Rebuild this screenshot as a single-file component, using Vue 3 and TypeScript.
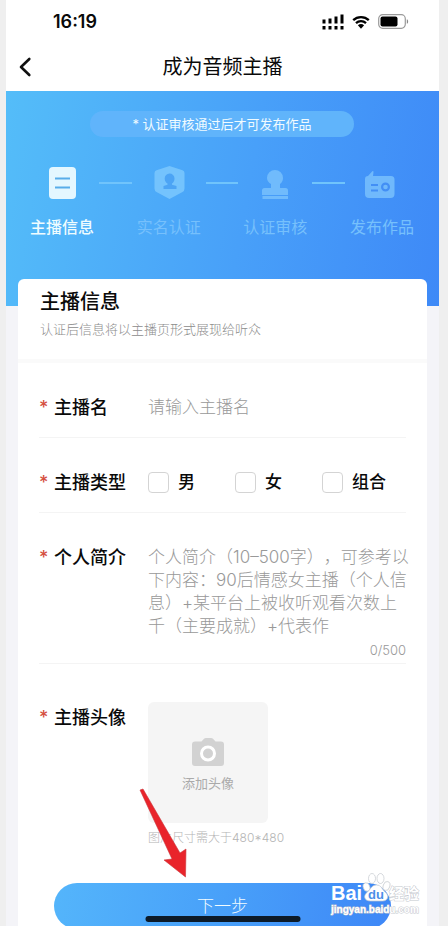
<script setup lang="ts">
import { computed, ref } from 'vue'

interface Step {
  id: string
  label: string
}

const steps: Step[] = [
  { id: 'info', label: '主播信息' },
  { id: 'identity', label: '实名认证' },
  { id: 'review', label: '认证审核' },
  { id: 'publish', label: '发布作品' },
]

const hostTypes: string[] = ['男', '女', '组合']

const activeStep = ref(0)
const hostName = ref('')
const selectedTypes = ref<string[]>([])
const intro = ref('')
const maxIntro = 500
const introCount = computed(() => `${intro.value.length}/${maxIntro}`)
</script>

<template>
  <div class="screen">
    <div class="status-bar">
      <span class="clock">16:19</span>
      <div class="status-icons">
        <svg width="22" height="16" viewBox="0 0 22 16" aria-hidden="true">
          <path d="M0.5 5.5h3v4h-3zM6.5 4.5h3v5h-3zM12.500 2.500h3v7h-3zM18.500 0.500h3v9h-3zM0.500 12h3v3.500h-3zM6.500 12h3v3.500h-3zM12.500 12h3v3.500h-3zM18.500 12h3v3.500h-3z" />
        </svg>
        <svg width="18" height="14" viewBox="0 0 18 14" aria-hidden="true">
          <path d="M1.200 5.200a11.200 11.200 0 0 1 15.600 0M4 8.200a7.300 7.300 0 0 1 10 0" fill="none" stroke="#000" stroke-width="2.300" />
          <path d="M5.900 10.300a4.600 4.600 0 0 1 6.200 0L9 13.800z" />
        </svg>
        <svg width="31" height="15" viewBox="0 0 31 15" aria-hidden="true">
          <rect x="0.700" y="0.700" width="26.600" height="13.600" rx="4" fill="none" stroke="#9a9a9a" stroke-width="1.200" />
          <rect x="2.500" y="2.500" width="17" height="10" rx="2" />
          <path d="M28.800 5.200c1.800.7 1.800 3.900 0 4.600z" fill="#888" />
        </svg>
      </div>
    </div>

    <header class="nav">
      <button class="back" type="button" aria-label="返回">
        <svg width="14" height="20" viewBox="0 0 14 20" aria-hidden="true">
          <path d="M11.300 2L3 10l8.300 8" fill="none" stroke="#111" stroke-width="2.600" stroke-linecap="round" stroke-linejoin="round" />
        </svg>
      </button>
      <h1>成为音频主播</h1>
    </header>

    <main>
      <section class="banner">
        <p class="notice">* 认证审核通过后才可发布作品</p>
        <div class="steps">
          <template v-for="(step, index) in steps" :key="step.id">
            <span v-if="index > 0" class="connector"></span>
            <div class="step" :class="{ active: index === activeStep }">
              <svg width="34" height="36" viewBox="0 0 34 36" aria-hidden="true">
                <template v-if="step.id === 'info'">
                  <rect x="4" y="2" width="27" height="32" rx="4" fill="#e4f7ff" />
                  <path d="M10 13.500h15M10 22.500h15" stroke="#58adea" stroke-width="2" />
                </template>
                <template v-else-if="step.id === 'identity'">
                  <path d="M17.500 1l13 4.200q2 .7 2 2.800v15.500q0 2.500-2 3.500l-13 7-13-7q-2-1-2-3.500V8q0-2.100 2-2.800z" fill="#74c3fd" />
                  <path d="M17.500 8.500a5 5 0 0 1 5 5c0 2.400-1 4-2.500 5v1.200l4.500 1.300v3h-13v-3l4-1.300v-1.200c-1.700-1-2.800-2.600-2.800-5a4.900 4.900 0 0 1 4.800-5z" fill="#4ca4f5" />
                </template>
                <template v-else-if="step.id === 'review'">
                  <path d="M17 5a8 8 0 0 1 8 8c0 2.800-1.300 4.700-3 6v4h5.500q2.500 0 2.500 2.500V30H4v-4.500Q4 23 6.500 23H13v-4c-2.200-1.300-4-3.200-4-6a8 8 0 0 1 8-8zM4.500 31h25.500v3H4.500z" fill="#70bbfc" />
                </template>
                <template v-else>
                  <path d="M0 14q0-3 3-3L7.300 6.300q1.200-.8 1.200.7L8 11h18q3.500 0 3.500 3.500V29q0 4-4 4H4q-4 0-4-4z" fill="#70b9fc" />
                  <path d="M6 20h7M6 25.500h7" stroke="#438ff5" stroke-width="2" />
                  <circle cx="20.500" cy="22" r="3.400" fill="none" stroke="#438ff5" stroke-width="2.200" />
                </template>
              </svg>
              <span>{{ step.label }}</span>
            </div>
          </template>
        </div>
      </section>

      <section class="card">
        <div class="card-head">
          <h2>主播信息</h2>
          <p>认证后信息将以主播页形式展现给听众</p>
        </div>

        <form @submit.prevent>
          <div class="row">
            <label class="name" for="host-name">主播名</label>
            <input id="host-name" v-model="hostName" class="field" type="text" placeholder="请输入主播名" />
          </div>

          <div class="row" role="group" aria-labelledby="type-title">
            <span id="type-title" class="name">主播类型</span>
            <div class="field options">
              <label v-for="kind in hostTypes" :key="kind" class="option">
                <input v-model="selectedTypes" type="checkbox" :value="kind" />
                <span>{{ kind }}</span>
              </label>
            </div>
          </div>

          <div class="row intro">
            <label class="name" for="intro">个人简介</label>
            <div class="field">
              <textarea
                id="intro"
                v-model="intro"
                rows="4"
                :maxlength="maxIntro"
                placeholder="个人简介（10–500字），可参考以下内容：90后情感女主播（个人信息）+某平台上被收听观看次数上千（主要成就）+代表作"
              ></textarea>
              <span class="count">{{ introCount }}</span>
            </div>
          </div>

          <div class="row avatar">
            <span class="name">主播头像</span>
            <div class="field">
              <button class="upload" type="button">
                <svg width="32" height="28" viewBox="0 0 32 28" aria-hidden="true">
                  <path d="M3 3.500h6.500L12 .8Q12.600 0 14 0h5q1.400 0 2 .8l2.500 2.700H29q3 0 3 3V25q0 3-3 3H3q-3 0-3-3V6.500q0-3 3-3z" fill="#d2d2d2" />
                  <circle cx="16" cy="15.500" r="6.500" fill="#d2d2d2" stroke="#fff" stroke-width="3" />
                </svg>
                <span>添加头像</span>
              </button>
              <p class="hint">图片尺寸需大于480*480</p>
            </div>
          </div>

          <button class="next" type="submit">下一步</button>
        </form>
      </section>
    </main>

    <svg class="arrow" width="50" height="92" viewBox="0 0 50 92" aria-hidden="true">
      <path d="M5 3l3-1 37 64 6-4-.5 28L29 73l8-1z" transform="translate(0 -1)" fill="#e9242b" stroke="#c9353a" stroke-width="0.600" />
    </svg>
    <span class="home-bar"></span>
    <svg class="watermark" width="92" height="46" viewBox="0 0 92 46" aria-label="Baidu 经验">
      <g fill="#fff" stroke="#c4c8ce" stroke-width="0.700">
        <ellipse cx="36.500" cy="16" rx="3.300" ry="4.300" transform="rotate(-18 36.500 16)" />
        <ellipse cx="42" cy="7.500" rx="3.500" ry="5" />
        <ellipse cx="50.500" cy="7.500" rx="3.500" ry="5" />
        <ellipse cx="56.500" cy="15" rx="3.300" ry="4.600" transform="rotate(18 56.500 15)" />
        <path d="M46.500 14c5 0 5.500 4.500 8.500 7 5 4 2.500 9-2.500 9h-12c-6 0-8-5-3-9 3.500-3 4-7 9-7z" />
      </g>
      <text class="brand" x="1" y="29">Bai</text>
      <text class="du" x="38" y="28">du</text>
      <text class="exp" x="59" y="28">经验</text>
      <text class="site" x="1" y="42">jingyan.baidu.com</text>
    </svg>
  </div>
</template>

<style>
body {
  margin: 0;
  background: #efefef;
}
</style>

<style scoped>
* {
  box-sizing: border-box;
}

.screen {
  position: relative;
  height: 100vh;
  margin: 0 9px 0 6px;
  overflow: hidden;
  background: #f4f4f8;
  color: #0a0a0a;
  font-family: Inter, "Noto Sans CJK SC", sans-serif;
}

h1,
h2,
p {
  margin: 0;
}

button,
input,
textarea {
  font-family: inherit;
}

.status-bar {
  display: flex;
  align-items: center;
  justify-content: space-between;
  height: 43px;
  padding: 0 30px 0 47px;
  background: #fff;
}

.clock {
  font-size: 18px;
  font-weight: 600;
}

.status-icons {
  display: flex;
  align-items: center;
  gap: 8px;
}

.nav {
  display: grid;
  grid-template-columns: 48px 1fr 48px;
  align-items: center;
  height: 48px;
  background: #fff;
}

.back {
  display: flex;
  padding: 0 0 0 12px;
  border: 0;
  background: none;
}

h1 {
  font-size: 20px;
  font-weight: 400;
  line-height: 28px;
  text-align: center;
}

.banner {
  height: 215px;
  padding: 20px 25px 0 24px;
  background: linear-gradient(100deg, #54bdf9, #48a0f9 55%, #3e89f7);
}

.notice {
  width: 264px;
  margin: 0 auto;
  border-radius: 13px;
  background: #60b4fb;
  color: #f0fbff;
  font-size: 13px;
  line-height: 26px;
  text-align: center;
}

.steps {
  display: flex;
  margin-top: 28px;
}

.step {
  display: flex;
  flex-direction: column;
  align-items: center;
  gap: 14px;
  width: 64px;
  color: #76c0fc;
  font-size: 16px;
  line-height: 24px;
  white-space: nowrap;
}

.step.active {
  color: #effcff;
  font-weight: 500;
}

.connector {
  flex: 1;
  height: 2px;
  margin: 17px 5px 0;
  background: #70c4fc;
}

.card {
  position: relative;
  margin: -27px 12px 0;
  border-radius: 6px 6px 0 0;
  background: #fff;
}

.card-head {
  height: 84px;
  padding: 9px 22px 0;
  border-bottom: 4px solid #fafafa;
}

h2 {
  font-size: 20px;
  font-weight: 500;
  line-height: 28px;
}

.card-head p {
  margin-top: 3px;
  color: #8c8c8c;
  font-size: 13px;
  font-weight: 300;
  line-height: 20px;
}

form {
  padding: 0 21px 40px;
}

.row {
  display: flex;
  align-items: flex-start;
  padding: 33px 0 18px;
  border-bottom: 1px solid #f4f4f4;
}

.name {
  flex: 0 0 109px;
  font-size: 18px;
  font-weight: 500;
  line-height: 24px;
}

.name::before {
  display: inline-block;
  width: 15px;
  color: #d5503f;
  content: "*";
}

.row .name {
  height: 23px;
}

.field {
  flex: 1;
  min-width: 0;
}

input.field,
textarea {
  display: block;
  width: 100%;
  padding: 0;
  border: 0;
  outline: 0;
  background: none;
  color: #111;
  font-size: 17px;
  font-weight: 300;
  line-height: 23px;
  resize: none;
  overflow: hidden;
  text-spacing-trim: space-all;
}

input.field {
  height: 23px;
}

textarea {
  width: calc(100% + 5px);
}

::placeholder {
  color: #999;
  opacity: 1;
}

.options {
  display: flex;
}

.option {
  display: flex;
  align-items: center;
  gap: 9px;
  min-width: 87px;
  font-size: 17px;
  font-weight: 500;
  line-height: 23px;
  white-space: nowrap;
}

.option:last-child {
  min-width: 0;
}

.option input {
  appearance: none;
  width: 21px;
  height: 21px;
  margin: 0;
  border: 1px solid #d4d4d4;
  border-radius: 4px;
  background: #fff;
}

.option input:checked {
  border-color: #3e89f7;
  background: #3e89f7;
}

.intro {
  padding-bottom: 3px;
}

.count {
  display: block;
  margin-top: 2px;
  color: #999;
  font-size: 13px;
  font-weight: 300;
  line-height: 20px;
  text-align: right;
}

.avatar {
  padding: 38px 0 0;
  border-bottom: 0;
}

.avatar .name {
  margin-top: 4px;
}

.upload {
  display: flex;
  flex-direction: column;
  align-items: center;
  justify-content: center;
  gap: 8px;
  width: 120px;
  height: 121px;
  padding: 4px 0 0;
  border: 0;
  border-radius: 6px;
  background: #f5f5f5;
  color: #aaa;
  font-size: 13px;
  line-height: 18px;
}

.hint {
  margin-top: 6px;
  color: #b4b4b4;
  font-size: 12px;
  font-weight: 300;
  line-height: 18px;
}

.next {
  display: block;
  width: calc(100% - 30px);
  height: 46px;
  margin: 36px auto 0;
  padding: 0;
  border: 0;
  border-radius: 23px;
  background: linear-gradient(100deg, #54b5fb, #48a0f9 50%, #3e87f7);
  color: #f2fcff;
  font-size: 17px;
  font-weight: 300;
  line-height: 46px;
}

.arrow {
  position: absolute;
  bottom: 46px;
  left: 129px;
  overflow: visible;
}

.home-bar {
  position: absolute;
  bottom: 4px;
  left: 50%;
  width: 155px;
  height: 6px;
  border-radius: 3px;
  background: #0c1a28;
  transform: translateX(-50%);
}

.watermark {
  position: absolute;
  right: 17px;
  bottom: 9px;
}

.watermark text {
  fill: #fff;
}

.watermark .brand {
  font: 700 20px "Liberation Sans", sans-serif;
}

.watermark .du {
  font: 700 13px "Liberation Sans", sans-serif;
  fill: #4b8fe8;
}

.watermark .exp {
  font: 700 15px "Noto Sans CJK SC", sans-serif;
  stroke: #c4c8ce;
  stroke-width: 1px;
  paint-order: stroke;
}

.watermark .site {
  font: 700 10px "Liberation Sans", sans-serif;
  stroke: #c4c8ce;
  stroke-width: 1px;
  paint-order: stroke;
}
</style>
